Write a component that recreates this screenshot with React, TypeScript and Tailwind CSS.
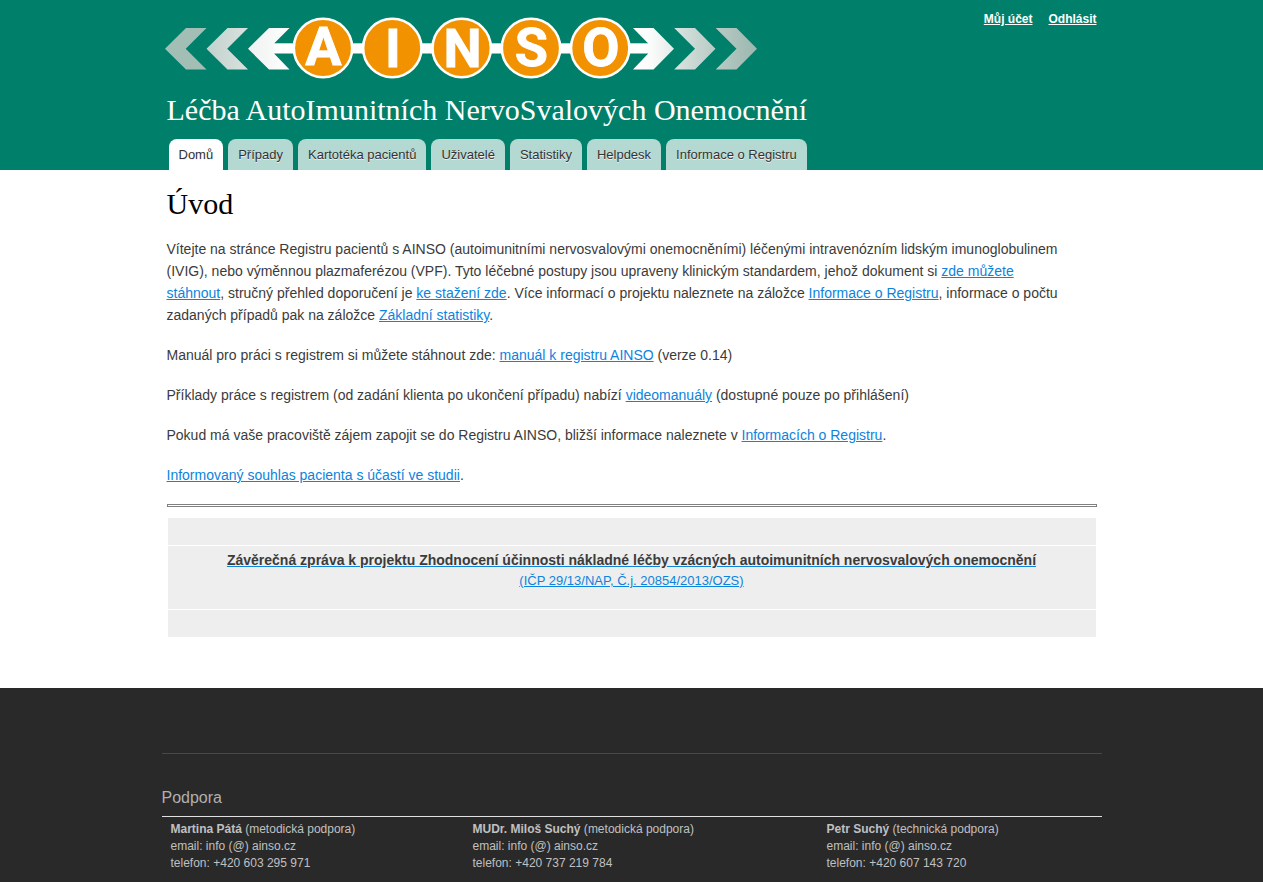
import type { ReactNode } from "react";

const tabs = ["Domů", "Případy", "Kartotéka pacientů", "Uživatelé", "Statistiky", "Helpdesk", "Informace o Registru"];

const letters = [
  { char: "A", cx: 323, x: 323.3, y: 65, font: "'Liberation Sans Narrow', Roboto, sans-serif" },
  { char: "I", cx: 392.3, x: 393, y: 66.5, font: "Roboto, sans-serif" },
  { char: "N", cx: 461.7, x: 462.5, y: 66.5, font: "Roboto, sans-serif" },
  { char: "S", cx: 531, x: 531.3, y: 66.2, font: "Roboto, sans-serif" },
  { char: "O", cx: 600.2, x: 600.8, y: 66.2, font: "Roboto, sans-serif" },
];

const contacts = [
  { name: "Martina Pátá", role: "metodická podpora", phone: "+420 603 295 971" },
  { name: "MUDr. Miloš Suchý", role: "metodická podpora", phone: "+420 737 219 784" },
  { name: "Petr Suchý", role: "technická podpora", phone: "+420 607 143 720" },
];

function Logo() {
  return (
    <svg role="img" aria-label="AINSO" className="block h-[62px] w-[592px] max-w-full" viewBox="165 17 592 62">
      <defs>
        <linearGradient id="fadeLeft" gradientUnits="userSpaceOnUse" x1="165" x2="290" y1="0" y2="0">
          <stop offset="0" stopColor="#a3beb5" />
          <stop offset="0.32" stopColor="#a3beb5" />
          <stop offset="0.34" stopColor="#c3d2cd" />
          <stop offset="0.65" stopColor="#d8e1de" />
          <stop offset="0.67" stopColor="#eef2f1" />
          <stop offset="1" stopColor="#ffffff" />
        </linearGradient>
        <linearGradient id="fadeRight" gradientUnits="userSpaceOnUse" x1="632" x2="757" y1="0" y2="0">
          <stop offset="0" stopColor="#ffffff" />
          <stop offset="0.16" stopColor="#fafbfb" />
          <stop offset="0.33" stopColor="#e4ebe9" />
          <stop offset="0.34" stopColor="#dae3e0" />
          <stop offset="0.66" stopColor="#b9cbc5" />
          <stop offset="1" stopColor="#9bb8ae" />
        </linearGradient>
      </defs>
      <rect x="274" y="43.3" width="374" height="10.2" fill="#fff" />
      <g fill="url(#fadeLeft)">
        <path d="M165 48.7 186 28H206.5L185.7 48.7 206.5 69.5H186Z" />
        <path d="M206.5 48.7 227.5 28H248L227.2 48.7 248 69.5H227.5Z" />
        <path d="M248 48.7 269 28H289.5L274.3 43.3V53.7L289.5 69.5H269Z" />
      </g>
      <g fill="url(#fadeRight)">
        <path d="M674 48.7 653.5 28H633L648 43.3V53.7L633 69.5H653.5Z" />
        <path d="M715.5 48.7 695 28H674.2L695 48.7 674.2 69.5H695Z" />
        <path d="M757 48.7 736.5 28H715.7L736.5 48.7 715.7 69.5H736.5Z" />
      </g>
      {letters.map(({ char, cx, x, y, font }) => (
        <g key={char}>
          <circle cx={cx} cy="48" r="29.2" fill="#f39200" stroke="#fff" strokeWidth="2.6" />
          <text
            x={x}
            y={y}
            textAnchor="middle"
            fill="#fff"
            stroke="#fff"
            strokeWidth="0.8"
            fontSize="54"
            fontWeight="700"
            fontFamily={font}
          >
            {char}
          </text>
        </g>
      ))}
    </svg>
  );
}

function TextLink({ children }: { children: ReactNode }) {
  return (
    <a href="#" className="text-[#0d83dd] underline">
      {children}
    </a>
  );
}

export default function App() {
  return (
    <div className="min-h-screen bg-[#292929] font-['Liberation_Sans',Arial,sans-serif] text-[#3b3b3b]">
      <header className="bg-[#00806a]">
        <div className="mx-auto max-w-[940px] px-[5px]">
          <div className="flex items-start justify-between">
            <a href="#" className="-ml-0.5 pt-[17px]">
              <Logo />
            </a>
            <nav aria-label="Účet" className="flex gap-4 pt-[11px] text-[12px] leading-4 font-bold text-white">
              <a href="#" className="underline">Můj účet</a>
              <a href="#" className="underline">Odhlásit</a>
            </nav>
          </div>
          <div className="pt-[13px] font-[Georgia,'Liberation_Serif',serif] text-[30px] leading-9 text-white">
            Léčba AutoImunitních NervoSvalových Onemocnění
          </div>
          <nav aria-label="Hlavní menu" className="flex gap-[5px] px-0.5 pt-[11px]">
            {tabs.map((tab, i) => (
              <a
                key={tab}
                href="#"
                className={`rounded-t-lg px-2.5 pt-1 pb-[3px] text-[13px] leading-6 text-[#333] [text-shadow:0_1px_0_#eee] ${i === 0 ? "bg-white" : "bg-[#b3d9d2]"}`}
              >
                {tab}
              </a>
            ))}
          </nav>
        </div>
      </header>

      <main className="bg-white pb-[50px]">
        <div className="mx-auto max-w-[940px] px-[5px] pt-4">
          <h1 className="font-[Georgia,'Liberation_Serif',serif] text-[30px] leading-9 text-black">Úvod</h1>
          <div className="mt-4 flex max-w-[896px] flex-col gap-[18px] text-[14px] leading-[22px]">
            <p>
              Vítejte na stránce Registru pacientů s AINSO (autoimunitními nervosvalovými onemocněními) léčenými
              intravenózním lidským imunoglobulinem (IVIG), nebo výměnnou plazmaferézou (VPF). Tyto léčebné postupy
              jsou upraveny klinickým standardem, jehož dokument si <TextLink>zde můžete stáhnout</TextLink>, stručný
              přehled doporučení je <TextLink>ke stažení zde</TextLink>. Více informací o projektu naleznete na
              záložce <TextLink>Informace o Registru</TextLink>, informace o počtu zadaných případů pak na
              záložce <TextLink>Základní statistiky</TextLink>.
            </p>
            <p>
              Manuál pro práci s registrem si můžete stáhnout zde: <TextLink>manuál k registru AINSO</TextLink> (verze
              0.14)
            </p>
            <p>
              Příklady práce s registrem (od zadání klienta po ukončení případu) nabízí{" "}
              <TextLink>videomanuály</TextLink> (dostupné pouze po přihlášení)
            </p>
            <p>
              Pokud má vaše pracoviště zájem zapojit se do Registru AINSO, bližší informace naleznete
              v <TextLink>Informacích o Registru</TextLink>.
            </p>
            <p>
              <TextLink>Informovaný souhlas pacienta s účastí ve studii</TextLink>.
            </p>
          </div>
          <hr className="mt-[18px] h-[3px] border border-[#808080]" />
          <table className="mt-2.5 w-full border-separate border-spacing-px text-center text-[13px] leading-5">
            <tbody>
              <tr>
                <td className="h-[27px] bg-[#eee]" />
              </tr>
              <tr>
                <td className="bg-[#eee] px-2 pt-1 pb-[18px]">
                  <a href="#" className="text-[#0d83dd] underline">
                    <strong className="text-[14px] text-[#3b3b3b]">
                      Závěrečná zpráva k projektu Zhodnocení účinnosti nákladné léčby vzácných autoimunitních
                      nervosvalových onemocnění
                    </strong>
                    <br />
                    (IČP 29/13/NAP, Č.j. 20854/2013/OZS)
                  </a>
                </td>
              </tr>
              <tr>
                <td className="h-[27px] bg-[#eee]" />
              </tr>
            </tbody>
          </table>
        </div>
      </main>

      <footer className="pt-[65px] pb-3 text-[#c0c0c0]">
        <div className="mx-auto max-w-[940px] border-t border-[#484848] pt-[33px]">
          <h2 className="border-b border-[#e0e0e0] pb-[7px] text-[16px] leading-[22px] text-[#b0b0b0]">Podpora</h2>
          <div className="grid grid-cols-[302px_354px_1fr] px-[9px] pt-1 text-[12px] leading-[17px]">
            {contacts.map((contact) => (
              <address key={contact.name} className="not-italic">
                <strong>{contact.name}</strong> ({contact.role})
                <br />
                email: info (@) ainso.cz
                <br />
                telefon: {contact.phone}
              </address>
            ))}
          </div>
        </div>
      </footer>
    </div>
  );
}
